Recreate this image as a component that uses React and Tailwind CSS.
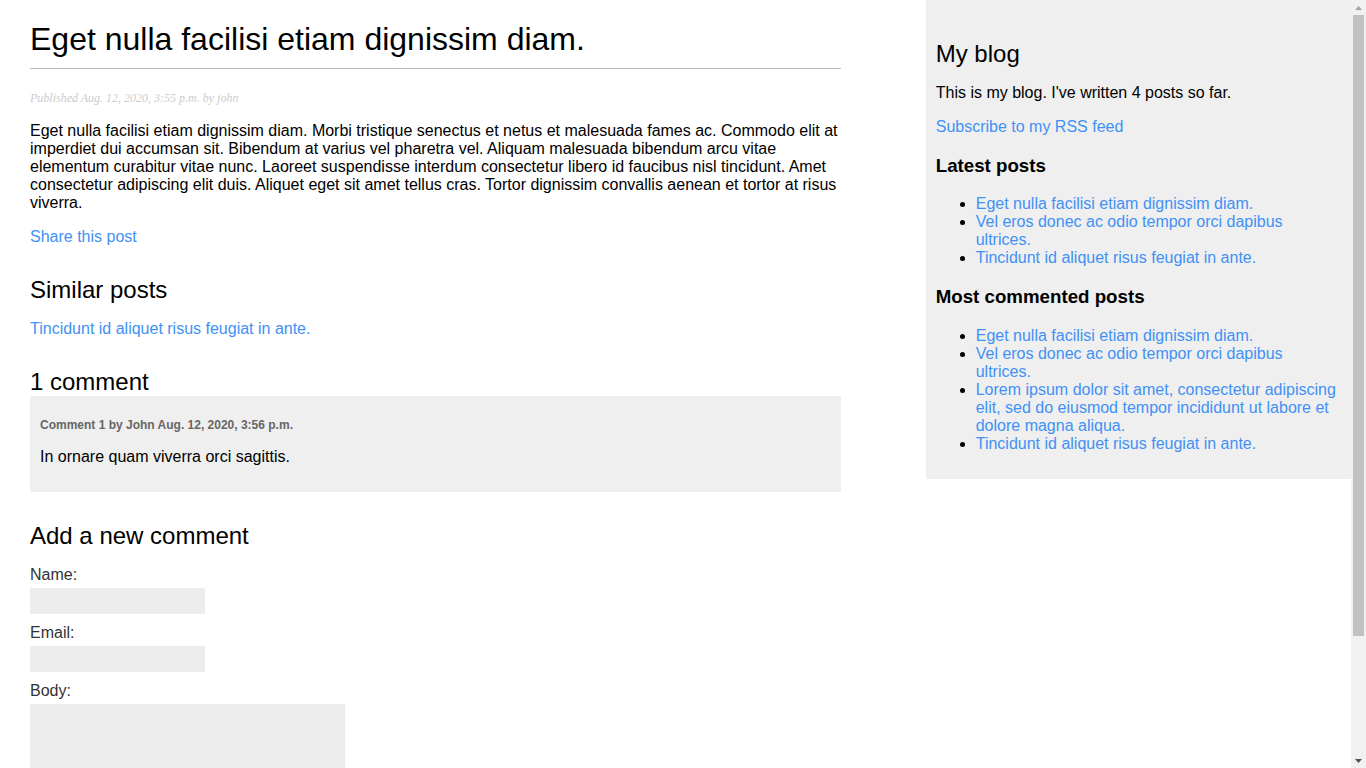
import React from "react";

const linkCls = "text-[#4191f5] no-underline";

function Sidebar() {
  const latest = [
    "Eget nulla facilisi etiam dignissim diam.",
    "Vel eros donec ac odio tempor orci dapibus ultrices.",
    "Tincidunt id aliquet risus feugiat in ante.",
  ];
  const most = [
    "Eget nulla facilisi etiam dignissim diam.",
    "Vel eros donec ac odio tempor orci dapibus ultrices.",
    "Lorem ipsum dolor sit amet, consectetur adipiscing elit, sed do eiusmod tempor incididunt ut labore et dolore magna aliqua.",
    "Tincidunt id aliquet risus feugiat in ante.",
  ];
  return (
    <div className="w-[calc(30%+20px)] self-start bg-[#efefef] p-[10px] flow-root">
      <h2 className="mt-[30px] mb-0 text-[24px] font-normal">My blog</h2>
      <p className="my-4">This is my blog. I've written 4 posts so far.</p>
      <p className="my-4">
        <a href="#" className={linkCls}>Subscribe to my RSS feed</a>
      </p>
      <h3 className="my-[18.72px] text-[18.72px] font-bold">Latest posts</h3>
      <ul className="my-4 list-disc pl-[40px]">
        {latest.map((t, i) => (
          <li key={i}>
            <a href="#" className={linkCls}>{t}</a>
          </li>
        ))}
      </ul>
      <h3 className="my-[18.72px] text-[18.72px] font-bold">Most commented posts</h3>
      <ul className="my-4 list-disc pl-[40px]">
        {most.map((t, i) => (
          <li key={i}>
            <a href="#" className={linkCls}>{t}</a>
          </li>
        ))}
      </ul>
    </div>
  );
}

function Content() {
  return (
    <div className="w-[calc(60%+30px)] pl-[30px] flow-root">
      <h1 className="my-[21.44px] border-b border-[#bbb] pb-[10px] text-[32px] font-normal">
        Eget nulla facilisi etiam dignissim diam.
      </h1>
      <p className="my-[12px] font-['Liberation_Serif',Georgia,serif] text-[12px] italic text-[#ccc]">
        Published Aug. 12, 2020, 3:55 p.m. by john
      </p>
      <p className="my-4">
        Eget nulla facilisi etiam dignissim diam. Morbi tristique senectus et netus et malesuada fames ac. Commodo elit at imperdiet dui accumsan sit. Bibendum at varius vel pharetra vel. Aliquam malesuada bibendum arcu vitae elementum curabitur vitae nunc. Laoreet suspendisse interdum consectetur libero id faucibus nisl tincidunt. Amet consectetur adipiscing elit duis. Aliquet eget sit amet tellus cras. Tortor dignissim convallis aenean et tortor at risus viverra.
      </p>
      <p className="my-4">
        <a href="#" className={linkCls}>Share this post</a>
      </p>
      <h2 className="mt-[30px] mb-0 text-[24px] font-normal">Similar posts</h2>
      <p className="my-4">
        <a href="#" className={linkCls}>Tincidunt id aliquet risus feugiat in ante.</a>
      </p>
      <h2 className="mt-[30px] mb-0 text-[24px] font-normal">1 comment</h2>
      <div className="flow-root bg-[#efefef] p-[10px]">
        <p className="my-[12px] text-[12px] font-bold text-[#666]">
          Comment 1 by John Aug. 12, 2020, 3:56 p.m.
        </p>
        <p className="my-4">In ornare quam viverra orci sagittis.</p>
      </div>
      <h2 className="mt-[30px] mb-0 text-[24px] font-normal">Add a new comment</h2>
      <form className="my-4 flow-root" onSubmit={(e) => e.preventDefault()}>
        <label className="mb-[4px] block text-[#333]">Name:</label>
        <input type="text" className="mb-[10px] block h-[26px] w-[175px] border-0 bg-[#ededed] px-[10px] py-[6px] text-[12px] outline-none" />
        <label className="mb-[4px] block text-[#333]">Email:</label>
        <input type="email" className="mb-[10px] block h-[26px] w-[175px] border-0 bg-[#ededed] px-[10px] py-[6px] text-[12px] outline-none" />
        <label className="mb-[4px] block text-[#333]">Body:</label>
        <textarea className="mb-[10px] block h-[152px] w-[315px] resize-none border-0 bg-[#ededed] px-[10px] py-[6px] text-[12px] outline-none" />
        <p className="mt-[16px] mb-[16px]">
          <button type="submit" className="rounded-[3px] border-0 bg-[#12c064] px-[12px] py-[6px] text-[12px] text-white">
            Add comment
          </button>
        </p>
      </form>
    </div>
  );
}

function FakeScrollbar() {
  return (
    <div className="fixed top-0 right-0 flex h-screen w-[15px] flex-col items-center bg-[#f1f1f1]">
      <div className="flex h-[15px] w-full items-center justify-center">
        <svg width="7" height="4" viewBox="0 0 7 4">
          <path d="M3.5 0 L7 4 L0 4 Z" fill="#a3a3a3" />
        </svg>
      </div>
      <div className="mx-auto h-[621px] w-[11px] bg-[#c1c1c1]" />
      <div className="flex-1" />
      <div className="flex h-[15px] w-full items-center justify-center">
        <svg width="7" height="4" viewBox="0 0 7 4">
          <path d="M0 0 L7 0 L3.5 4 Z" fill="#505050" />
        </svg>
      </div>
    </div>
  );
}

export default function App() {
  return (
    <div className="w-[1351px]">
      <div className="flex justify-between font-['Liberation_Sans',Arial,Helvetica,sans-serif] text-[16px] leading-[normal] text-black">
        <Content />
        <Sidebar />
      </div>
      <FakeScrollbar />
    </div>
  );
}
